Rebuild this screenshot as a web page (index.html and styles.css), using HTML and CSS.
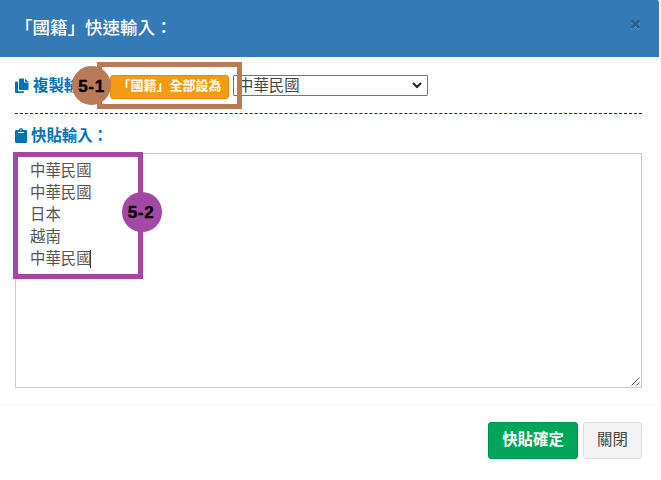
FILE: index.html
```html
<!DOCTYPE html>
<html lang="zh-Hant">
<head>
<meta charset="utf-8">
<title>快速輸入</title>
<link rel="stylesheet" href="styles.css">
</head>
<body>
<div class="modal">
  <header class="modal-header">
    <h4 class="title">「國籍」快速輸入：</h4>
    <button class="close" aria-label="關閉視窗"><svg width="11" height="11" viewBox="0 0 11 11"><path d="M1.5 2.5l8 7.5M9.5 2.5l-8 7.5" stroke="#6ba0cd" stroke-width="2.4"/><path d="M1.5 1.5l8 7.5M9.5 1.5l-8 7.5" stroke="#285e8e" stroke-width="2.6"/></svg></button>
  </header>
  <main class="modal-body">
    <div class="copy-row">
      <svg class="copy-icon" width="14" height="16" viewBox="0 0 14 16"><path fill="#0073b7" d="M1 3.5h2V12a1.2 1.2 0 0 0 1.2 1.2H9V14a1 1 0 0 1-1 1H1a1 1 0 0 1-1-1V4.5a1 1 0 0 1 1-1zM5 .5h4v4h4.5V11a1 1 0 0 1-1 1H5a1 1 0 0 1-1-1V1.5a1 1 0 0 1 1-1zM10 .5L13.5 4H10z"/></svg>
      <span class="label copy-label">複製輸入：</span>
      <button class="btn-warning">「國籍」全部設為</button>
      <div class="select"><span>中華民國</span><svg width="10" height="7" viewBox="0 0 10 7"><path d="M1 1l4 4 4-4" fill="none" stroke="#222" stroke-width="2"/></svg></div>
      <div class="mark mark-copy"></div>
      <div class="badge badge-copy">5-1</div>
    </div>
    <div class="paste-row">
      <svg width="12" height="15" viewBox="0 0 12 15"><path fill="#0073b7" fill-rule="evenodd" d="M1.2 2H4a2 2 0 0 1 4 0h2.8A1.2 1.2 0 0 1 12 3.2v10.6a1.2 1.2 0 0 1-1.2 1.2H1.2A1.2 1.2 0 0 1 0 13.8V3.2A1.2 1.2 0 0 1 1.2 2zM3 4v1h6V4zM5.3 2a.7.7 0 1 0 1.4 0 .7.7 0 0 0-1.4 0z"/></svg>
      <span class="label paste-label">快貼輸入：</span>
    </div>
    <div class="textarea">
      <div>中華民國</div>
      <div>中華民國</div>
      <div>日本</div>
      <div>越南</div>
      <div class="current">中華民國</div>
      <svg class="grip" width="9" height="9" viewBox="0 0 9 9"><path d="M.5 8.5l8-8M5.5 8.5l3-3" stroke="#555" fill="none"/></svg>
      <div class="mark mark-paste"></div>
      <div class="badge badge-paste">5-2</div>
    </div>
  </main>
  <footer class="modal-footer">
    <button class="btn btn-success">快貼確定</button>
    <button class="btn btn-default">關閉</button>
  </footer>
</div>
</body>
</html>
```
FILE: styles.css
```css
* { box-sizing: border-box; }
body {
  margin: 0;
  background: #fff;
  font-family: "Liberation Sans", "Noto Sans CJK TC", sans-serif;
  font-size: 15px;
  color: #444;
  overflow: hidden;
}
button { font-family: inherit; margin: 0; }
.modal { width: 659px; height: 480px; }
.modal-header {
  height: 57px;
  padding: 0 18px 1px 15px;
  display: flex;
  align-items: center;
  justify-content: space-between;
  background: #337ab7;
  border-top-right-radius: 2px;
}
.title {
  margin: 0;
  font-size: 17.5px;
  line-height: 24px;
  font-weight: 500;
  color: #fff;
}
.close {
  display: flex;
  padding: 0;
  margin: 0 0 8px;
  border: 0;
  background: none;
}
.modal-body { padding: 0 17px 0 15px; }
.copy-row {
  position: relative;
  height: 57px;
  display: flex;
  align-items: center;
  border-bottom: 1px dashed #800000;
}
.copy-icon { margin-top: 1px; }
.copy-label { width: 77px; margin: 2px 0 0 4px; }
.label {
  font-weight: 700;
  font-size: 15.4px;
  line-height: 22px;
  color: #0073b7;
  white-space: nowrap;
}
.paste-label { margin-top: 2px; }
.btn-warning {
  width: 119px;
  height: 24px;
  margin-top: 3px;
  padding: 0 0 1px;
  border: 1px solid #e08e0b;
  border-radius: 3px;
  background: #f39c12;
  color: #fff;
  font-size: 13px;
  line-height: 20px;
  font-weight: 700;
  white-space: nowrap;
}
.select {
  width: 195px;
  height: 21px;
  margin: 0 0 0 4px;
  padding: 0 5px 0 4px;
  display: flex;
  align-items: center;
  justify-content: space-between;
  border: 1px solid #767676;
  border-radius: 1px;
  font-size: 15.4px;
  line-height: 19px;
}
.mark { position: absolute; border: 5px solid; }
.mark-copy {
  left: 82px;
  top: 5px;
  width: 145px;
  height: 47px;
  border-color: #b97a57;
}
.badge {
  position: absolute;
  width: 39px;
  height: 39px;
  border-radius: 50%;
  font: 700 17px/41px "Liberation Sans", sans-serif;
  letter-spacing: .6px;
  -webkit-text-stroke: .4px #000;
  text-align: center;
  color: #000;
}
.badge-copy { left: 57px; top: 9px; background: #b97a57; }
.paste-row {
  height: 39px;
  padding-top: 3px;
  display: flex;
  align-items: center;
  gap: 4px;
}
.textarea {
  position: relative;
  height: 235px;
  padding: 6px 14px;
  border: 1px solid #c3ccd5;
  font-size: 15.4px;
  line-height: 22px;
  color: #555;
}
.current {
  width: 61px;
  height: 18px;
  margin-top: 2px;
  border-right: 1px solid #222;
  line-height: 18px;
  white-space: nowrap;
}
.grip { position: absolute; right: 1px; bottom: 1px; }
.mark-paste {
  left: -3px;
  top: -2px;
  width: 130px;
  height: 127px;
  border-color: #a349a4;
}
.badge-paste {
  left: 106px;
  top: 38px;
  width: 40px;
  height: 40px;
  padding-right: 2px;
  background: #a349a4;
}
.modal-footer {
  margin-top: 16px;
  padding: 17px 17px 0 0;
  display: flex;
  justify-content: flex-end;
  gap: 5px;
  border-top: 1px solid #f4f4f4;
}
.btn {
  height: 37px;
  padding: 0 0 2px;
  border-radius: 3px;
  font-size: 15.4px;
  line-height: 22px;
}
.btn-success {
  width: 90px;
  border: 1px solid #008d4c;
  background: #00a65a;
  color: #fff;
  font-weight: 700;
}
.btn-default {
  width: 59px;
  border: 1px solid #ddd;
  background: #f4f4f4;
  color: #444;
}
```
